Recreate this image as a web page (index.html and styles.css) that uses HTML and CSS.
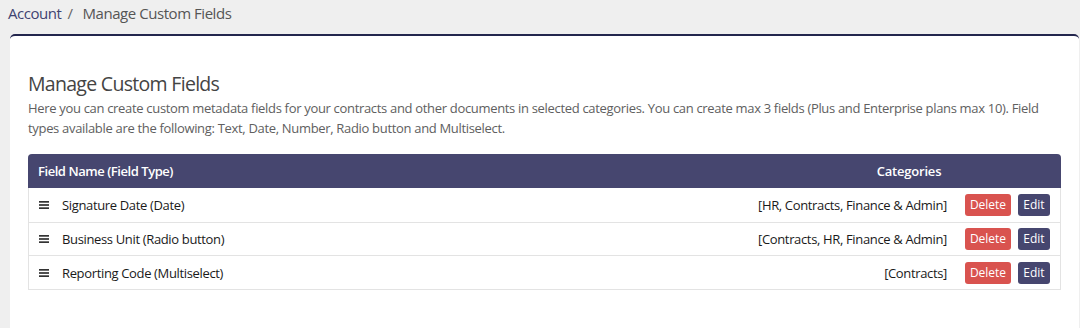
FILE: index.html
```html
<!DOCTYPE html>
<html>
<head>
<meta charset="utf-8">
<link rel="stylesheet" href="styles.css">
</head>
<body>
<div class="breadcrumb"><a class="crumb-link">Account</a><span class="sep">/</span><span class="crumb-current">Manage Custom Fields</span></div>
<div class="card">
  <h2 class="title">Manage Custom Fields</h2>
  <p class="desc">Here you can create custom metadata fields for your contracts and other documents in selected categories. You can create max 3 fields (Plus and Enterprise plans max 10). Field types available are the following: Text, Date, Number, Radio button and Multiselect.</p>
  <div class="table">
    <div class="thead">
      <div class="th-name">Field Name (Field Type)</div>
      <div class="th-cat">Categories</div>
    </div>
    <div class="row">
      <div class="name"><svg class="handle" viewBox="0 0 10 8"><rect x="0" y="0" width="10" height="1.7"/><rect x="0" y="3.15" width="10" height="1.7"/><rect x="0" y="6.3" width="10" height="1.7"/></svg>Signature Date (Date)</div>
      <div class="cat">[HR, Contracts, Finance &amp; Admin]</div>
      <div class="actions"><button class="btn btn-delete">Delete</button><button class="btn btn-edit">Edit</button></div>
    </div>
    <div class="row">
      <div class="name"><svg class="handle" viewBox="0 0 10 8"><rect x="0" y="0" width="10" height="1.7"/><rect x="0" y="3.15" width="10" height="1.7"/><rect x="0" y="6.3" width="10" height="1.7"/></svg>Business Unit (Radio button)</div>
      <div class="cat">[Contracts, HR, Finance &amp; Admin]</div>
      <div class="actions"><button class="btn btn-delete">Delete</button><button class="btn btn-edit">Edit</button></div>
    </div>
    <div class="row">
      <div class="name"><svg class="handle" viewBox="0 0 10 8"><rect x="0" y="0" width="10" height="1.7"/><rect x="0" y="3.15" width="10" height="1.7"/><rect x="0" y="6.3" width="10" height="1.7"/></svg>Reporting Code (Multiselect)</div>
      <div class="cat">[Contracts]</div>
      <div class="actions"><button class="btn btn-delete">Delete</button><button class="btn btn-edit">Edit</button></div>
    </div>
  </div>
</div>
</body>
</html>
```
FILE: styles.css
```css
* { box-sizing: border-box; }
html, body { margin: 0; padding: 0; }
body {
  background: #efefef;
  font-family: "Open Sans", "Liberation Sans", sans-serif;
  color: #333;
  width: 1080px;
  height: 328px;
  overflow: hidden;
}
.breadcrumb {
  height: 34px;
  padding: 2px 0 0 8px;
  font-size: 15px;
  line-height: 22px;
  color: #555;
  letter-spacing: -0.45px;
}
.crumb-link { color: #3f4371; text-decoration: none; }
.sep { color: #666; margin: 0 10px 0 6px; }
.card {
  margin-left: 10px;
  margin-right: 1px;
  background: #fff;
  border-top: 2px solid #23264d;
  border-radius: 5px 5px 0 0;
  padding: 34px 18px 40px 18px;
  height: 300px;
}
.title {
  margin: 0;
  font-size: 19.5px;
  font-weight: 400;
  line-height: 28px;
  color: #444;
  letter-spacing: -0.7px;
}
.desc {
  margin: 0 0 16px 0;
  font-size: 13px;
  line-height: 20px;
  color: #606060;
  letter-spacing: -0.32px;
}
.table {
  width: 1033px;
  border: 1px solid #e3e3e3;
  border-top: none;
  border-radius: 4px 4px 0 0;
}
.thead {
  display: flex;
  align-items: center;
  height: 34px;
  background: #46466f;
  color: #fff;
  font-size: 13px;
  font-weight: 600;
  border-radius: 4px 4px 0 0;
  margin: 0 -1px;
  letter-spacing: -0.45px;
}
.th-name { flex: 1; padding-left: 10px; }
.th-cat { width: 200px; text-align: center; margin-right: 52px; letter-spacing: -0.2px; }
.row {
  display: flex;
  align-items: center;
  height: 33.7px;
  border-top: 1px solid #e3e3e3;
  font-size: 13px;
  color: #1a1a1a;
  letter-spacing: -0.35px;
}
.thead + .row { border-top: none; }
.name { flex: 1; display: flex; align-items: center; padding-left: 10px; }
.handle { width: 10px; height: 8px; fill: #333; margin-right: 13px; }
.cat { text-align: right; letter-spacing: -0.35px; }
.actions { display: flex; gap: 7px; margin-left: 18px; margin-right: 10px; }
.btn {
  font-family: "Open Sans", "Liberation Sans", sans-serif;
  font-size: 12px;
  color: #fff;
  border: none;
  border-radius: 3px;
  height: 22px;
  padding: 0;
  line-height: 22px;
}
.btn-delete { background: #d9534f; width: 46px; }
.btn-edit { background: #46466f; width: 32px; }
```
